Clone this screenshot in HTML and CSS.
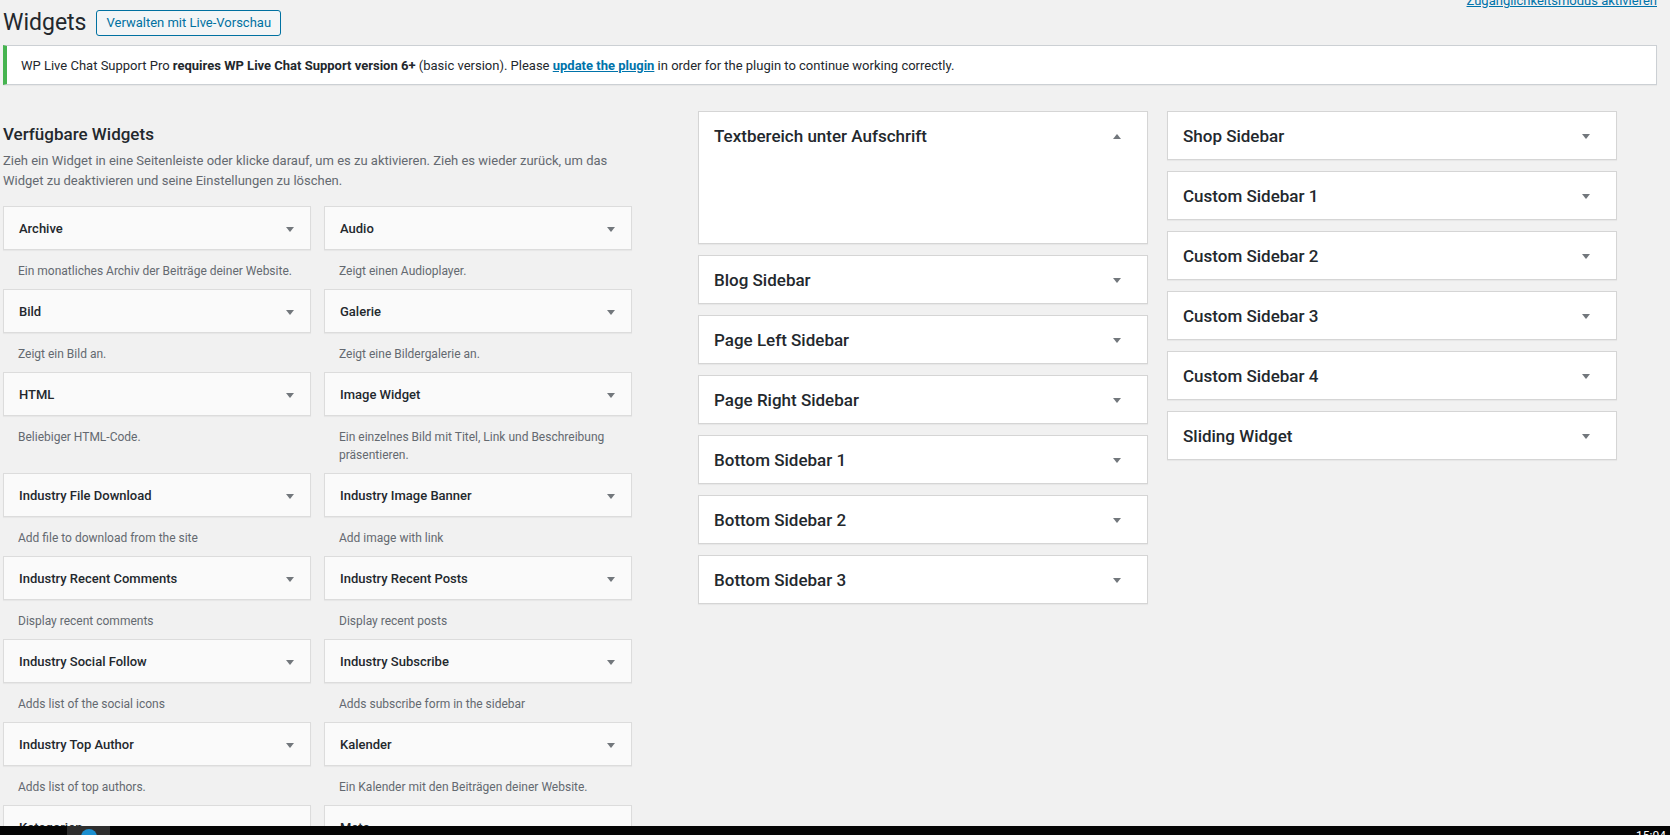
FILE: index.html
```html
<!DOCTYPE html>
<html lang="de">

<head>
    <meta charset="UTF-8">
    <meta name="viewport" content="width=device-width, initial-scale=1.0">
    <title>Widgets</title>
    <link rel="stylesheet" href="styles.css">
</head>

<body>
    <div class="wrap">
        <header class="page-head">
            <h1>Widgets</h1>
            <a href="#" class="page-title-action">Verwalten mit Live-Vorschau</a>
            <a href="#" class="access-link">Zugänglichkeitsmodus aktivieren</a>
        </header>

        <div class="notice">
            WP Live Chat Support Pro <strong>requires WP Live Chat Support version 6+</strong> (basic version). Please
            <a href="#"><strong>update the plugin</strong></a> in order for the plugin to continue working correctly.
        </div>

        <div class="widgets-area">
            <section class="widgets-left">
                <h2>Verfügbare Widgets</h2>
                <p class="sidebar-description">Zieh ein Widget in eine Seitenleiste oder klicke darauf, um es zu aktivieren. Zieh es wieder zurück, um das Widget zu deaktivieren und seine Einstellungen zu löschen.</p>

                <div class="widget-list">
                    <div class="widget">
                        <div class="widget-top"><span>Archive</span><i class="arrow"></i></div>
                        <div class="widget-description">Ein monatliches Archiv der Beiträge deiner Website.</div>
                    </div>
                    <div class="widget">
                        <div class="widget-top"><span>Audio</span><i class="arrow"></i></div>
                        <div class="widget-description">Zeigt einen Audioplayer.</div>
                    </div>
                    <div class="widget">
                        <div class="widget-top"><span>Bild</span><i class="arrow"></i></div>
                        <div class="widget-description">Zeigt ein Bild an.</div>
                    </div>
                    <div class="widget">
                        <div class="widget-top"><span>Galerie</span><i class="arrow"></i></div>
                        <div class="widget-description">Zeigt eine Bildergalerie an.</div>
                    </div>
                    <div class="widget">
                        <div class="widget-top"><span>HTML</span><i class="arrow"></i></div>
                        <div class="widget-description">Beliebiger HTML-Code.</div>
                    </div>
                    <div class="widget">
                        <div class="widget-top"><span>Image Widget</span><i class="arrow"></i></div>
                        <div class="widget-description">Ein einzelnes Bild mit Titel, Link und Beschreibung präsentieren.</div>
                    </div>
                    <div class="widget">
                        <div class="widget-top"><span>Industry File Download</span><i class="arrow"></i></div>
                        <div class="widget-description">Add file to download from the site</div>
                    </div>
                    <div class="widget">
                        <div class="widget-top"><span>Industry Image Banner</span><i class="arrow"></i></div>
                        <div class="widget-description">Add image with link</div>
                    </div>
                    <div class="widget">
                        <div class="widget-top"><span>Industry Recent Comments</span><i class="arrow"></i></div>
                        <div class="widget-description">Display recent comments</div>
                    </div>
                    <div class="widget">
                        <div class="widget-top"><span>Industry Recent Posts</span><i class="arrow"></i></div>
                        <div class="widget-description">Display recent posts</div>
                    </div>
                    <div class="widget">
                        <div class="widget-top"><span>Industry Social Follow</span><i class="arrow"></i></div>
                        <div class="widget-description">Adds list of the social icons</div>
                    </div>
                    <div class="widget">
                        <div class="widget-top"><span>Industry Subscribe</span><i class="arrow"></i></div>
                        <div class="widget-description">Adds subscribe form in the sidebar</div>
                    </div>
                    <div class="widget">
                        <div class="widget-top"><span>Industry Top Author</span><i class="arrow"></i></div>
                        <div class="widget-description">Adds list of top authors.</div>
                    </div>
                    <div class="widget">
                        <div class="widget-top"><span>Kalender</span><i class="arrow"></i></div>
                        <div class="widget-description">Ein Kalender mit den Beiträgen deiner Website.</div>
                    </div>
                    <div class="widget">
                        <div class="widget-top"><span>Kategorien</span><i class="arrow"></i></div>
                        <div class="widget-description">Eine Liste oder ein Dropdown-Menü von Kategorien.</div>
                    </div>
                    <div class="widget">
                        <div class="widget-top"><span>Meta</span><i class="arrow"></i></div>
                        <div class="widget-description">Anmelde-, RSS- und WordPress.org-Links.</div>
                    </div>
                </div>
            </section>

            <section class="sidebar-col">
                <div class="sidebar open">
                    <div class="sidebar-name"><h2>Textbereich unter Aufschrift</h2><i class="arrow up"></i></div>
                    <div class="sidebar-body"></div>
                </div>
                <div class="sidebar">
                    <div class="sidebar-name"><h2>Blog Sidebar</h2><i class="arrow"></i></div>
                </div>
                <div class="sidebar">
                    <div class="sidebar-name"><h2>Page Left Sidebar</h2><i class="arrow"></i></div>
                </div>
                <div class="sidebar">
                    <div class="sidebar-name"><h2>Page Right Sidebar</h2><i class="arrow"></i></div>
                </div>
                <div class="sidebar">
                    <div class="sidebar-name"><h2>Bottom Sidebar 1</h2><i class="arrow"></i></div>
                </div>
                <div class="sidebar">
                    <div class="sidebar-name"><h2>Bottom Sidebar 2</h2><i class="arrow"></i></div>
                </div>
                <div class="sidebar">
                    <div class="sidebar-name"><h2>Bottom Sidebar 3</h2><i class="arrow"></i></div>
                </div>
            </section>

            <section class="sidebar-col">
                <div class="sidebar">
                    <div class="sidebar-name"><h2>Shop Sidebar</h2><i class="arrow"></i></div>
                </div>
                <div class="sidebar">
                    <div class="sidebar-name"><h2>Custom Sidebar 1</h2><i class="arrow"></i></div>
                </div>
                <div class="sidebar">
                    <div class="sidebar-name"><h2>Custom Sidebar 2</h2><i class="arrow"></i></div>
                </div>
                <div class="sidebar">
                    <div class="sidebar-name"><h2>Custom Sidebar 3</h2><i class="arrow"></i></div>
                </div>
                <div class="sidebar">
                    <div class="sidebar-name"><h2>Custom Sidebar 4</h2><i class="arrow"></i></div>
                </div>
                <div class="sidebar">
                    <div class="sidebar-name"><h2>Sliding Widget</h2><i class="arrow"></i></div>
                </div>
            </section>
        </div>
    </div>

    <!-- OS taskbar peeking in at the bottom of the screen -->
    <div class="taskbar">
        <span class="task-app"><i class="task-icon"></i></span>
        <span class="task-clock">15:04</span>
    </div>
</body>

</html>
```

FILE: styles.css
```css
html,
body {
    overflow: hidden;
}

body {
    margin: 0;
    background-color: #f1f1f1;
    color: #23282d;
    font-family: -apple-system, BlinkMacSystemFont, "Segoe UI", Roboto, Oxygen-Sans, Ubuntu, Cantarell, "Helvetica Neue", sans-serif;
    font-size: 13px;
    line-height: 1.4em;
}

a {
    color: #0073aa;
}

.wrap {
    margin: 0 13px 0 3px;
}

.page-head {
    display: flex;
    align-items: center;
    padding-top: 8px;
}

.page-head h1 {
    margin: 0;
    font-size: 23px;
    font-weight: 400;
    line-height: 30px;
}

.page-title-action {
    margin-left: 10px;
    padding: 0 9px;
    line-height: 24px;
    border: 1px solid #0071a1;
    border-radius: 3px;
    background: #f3f5f6;
    color: #0071a1;
    text-decoration: none;
}

.access-link {
    align-self: flex-start;
    margin-left: auto;
    margin-top: -17px;
    line-height: 20px;
}

.notice {
    margin-top: 7px;
    padding: 10px 12px 8px 14px;
    line-height: 20px;
    background: #fff;
    border: 1px solid #ccd0d4;
    border-left: 4px solid #46b450;
    box-shadow: 0 1px 1px rgba(0, 0, 0, 0.04);
}

.widgets-area {
    display: flex;
    align-items: flex-start;
    margin-top: 26px;
}

.widgets-left {
    width: 629px;
    margin-right: 66px;
}

.widgets-left h2 {
    margin: 11px 0 0;
    font-size: 17px;
    font-weight: 500;
    line-height: 24px;
}

.sidebar-description {
    margin: 5px 0 15px;
    line-height: 20px;
    color: #646970;
}

.widget-list {
    display: grid;
    grid-template-columns: 308px 308px;
    column-gap: 13px;
    align-items: start;
}

.widget-top {
    display: flex;
    align-items: center;
    padding: 13px 16px 11px 15px;
    line-height: 18px;
    font-weight: 500;
    background: #fafafa;
    border: 1px solid #dcdcdc;
    box-shadow: 0 1px 1px rgba(0, 0, 0, 0.04);
}

.widget-description {
    padding: 12px 15px 9px;
    font-size: 12px;
    line-height: 18px;
    color: #646970;
}

.arrow {
    margin-left: auto;
    width: 0;
    height: 0;
    border-left: 4px solid transparent;
    border-right: 4px solid transparent;
    border-top: 5px solid #72777c;
}

.arrow.up {
    border-top: 0;
    border-bottom: 5px solid #72777c;
}

.sidebar-col {
    width: 450px;
    margin-right: 19px;
}

.sidebar {
    margin-bottom: 11px;
    background: #fff;
    border: 1px solid #d5d5d5;
    box-shadow: 0 1px 1px rgba(0, 0, 0, 0.04);
}

.sidebar-name {
    display: flex;
    align-items: center;
    padding: 13px 26px 11px 15px;
}

.sidebar-name h2 {
    margin: 0;
    font-size: 17px;
    font-weight: 500;
    line-height: 23px;
}

.sidebar-body {
    height: 84px;
}

.taskbar {
    position: fixed;
    left: 0;
    right: 0;
    bottom: 0;
    height: 9px;
    display: flex;
    background: #050505;
    overflow: hidden;
}

.task-app {
    width: 43px;
    margin-left: 67px;
    background: #2e2e2e;
    display: flex;
    justify-content: center;
}

.task-icon {
    width: 16px;
    height: 16px;
    margin-top: 3px;
    border-radius: 50%;
    background: #1b8fd0;
}

.task-clock {
    margin-left: auto;
    margin-right: 4px;
    padding-top: 3px;
    color: #fff;
    font-size: 12px;
    line-height: 14px;
}
```
